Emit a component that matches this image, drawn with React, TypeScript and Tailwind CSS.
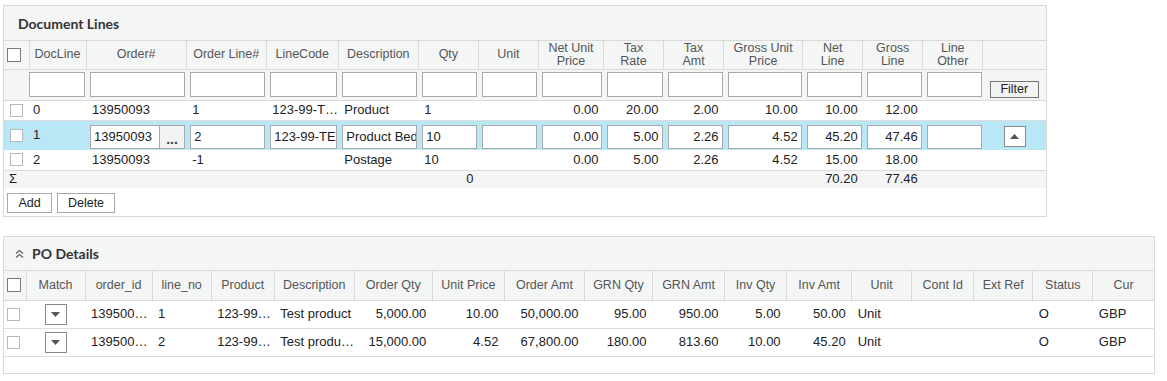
const docCols = [25, 57, 100, 80, 72, 80, 60, 60, 65, 60, 60, 79, 60, 60, 60, 63];

const docHeaders: string[][] = [
  ["DocLine"],
  ["Order#"],
  ["Order Line#"],
  ["LineCode"],
  ["Description"],
  ["Qty"],
  ["Unit"],
  ["Net Unit", "Price"],
  ["Tax", "Rate"],
  ["Tax", "Amt"],
  ["Gross Unit", "Price"],
  ["Net", "Line"],
  ["Gross", "Line"],
  ["Line", "Other"],
  [],
];

type Cell = { v: string; r?: boolean };

const docRows: Cell[][] = [
  [
    { v: "0" },
    { v: "13950093" },
    { v: "1" },
    { v: "123-99-T…" },
    { v: "Product" },
    { v: "1" },
    { v: "" },
    { v: "0.00", r: true },
    { v: "20.00", r: true },
    { v: "2.00", r: true },
    { v: "10.00", r: true },
    { v: "10.00", r: true },
    { v: "12.00", r: true },
    { v: "" },
    { v: "" },
  ],
  [
    { v: "2" },
    { v: "13950093" },
    { v: "-1" },
    { v: "" },
    { v: "Postage" },
    { v: "10" },
    { v: "" },
    { v: "0.00", r: true },
    { v: "5.00", r: true },
    { v: "2.26", r: true },
    { v: "4.52", r: true },
    { v: "15.00", r: true },
    { v: "18.00", r: true },
    { v: "" },
    { v: "" },
  ],
];

const poCols = [22, 59, 67, 59, 63, 80, 78, 72, 80, 68, 72, 62, 65, 60, 62, 59, 60, 61];

const poHeaders = [
  "Match",
  "order_id",
  "line_no",
  "Product",
  "Description",
  "Order Qty",
  "Unit Price",
  "Order Amt",
  "GRN Qty",
  "GRN Amt",
  "Inv Qty",
  "Inv Amt",
  "Unit",
  "Cont Id",
  "Ext Ref",
  "Status",
  "Cur",
];

const poRows: Cell[][] = [
  [
    { v: "139500…" },
    { v: "1" },
    { v: "123-99…" },
    { v: "Test product" },
    { v: "5,000.00", r: true },
    { v: "10.00", r: true },
    { v: "50,000.00", r: true },
    { v: "95.00", r: true },
    { v: "950.00", r: true },
    { v: "5.00", r: true },
    { v: "50.00", r: true },
    { v: "Unit" },
    { v: "" },
    { v: "" },
    { v: "O" },
    { v: "GBP" },
  ],
  [
    { v: "139500…" },
    { v: "2" },
    { v: "123-99…" },
    { v: "Test produ…" },
    { v: "15,000.00", r: true },
    { v: "4.52", r: true },
    { v: "67,800.00", r: true },
    { v: "180.00", r: true },
    { v: "813.60", r: true },
    { v: "10.00", r: true },
    { v: "45.20", r: true },
    { v: "Unit" },
    { v: "" },
    { v: "" },
    { v: "O" },
    { v: "GBP" },
  ],
];

function Box({ head }: { head?: boolean }) {
  return (
    <span
      className={
        head
          ? "block h-[14px] w-[14px] border border-[#7a7a7a] bg-white"
          : "block h-[13px] w-[13px] border border-[#b8b8b8] bg-white"
      }
    />
  );
}

function Field({ value, right, w }: { value?: string; right?: boolean; w?: string }) {
  return (
    <div
      className={`h-[24px] ${w ?? "w-full"} overflow-hidden whitespace-nowrap border border-[#a8a8a8] bg-white px-[3px] leading-[22px] ${
        right ? "text-right" : ""
      }`}
    >
      {value}
    </div>
  );
}

function Triangle({ up }: { up?: boolean }) {
  return (
    <svg width="9" height="5" viewBox="0 0 9 5">
      <path d={up ? "M0 5 L4.5 0 L9 5 Z" : "M0 0 L4.5 5 L9 0 Z"} fill="#555" />
    </svg>
  );
}

function DocumentLines() {
  const edit = [
    { v: "2" },
    { v: "123-99-TE" },
    { v: "Product Bed" },
    { v: "10" },
    { v: "" },
    { v: "0.00", r: true },
    { v: "5.00", r: true },
    { v: "2.26", r: true },
    { v: "4.52", r: true },
    { v: "45.20", r: true },
    { v: "47.46", r: true },
    { v: "" },
  ];
  return (
    <section className="w-[1044px] border border-[#d9d9d9] bg-white">
      <div className="flex h-[35px] items-center border-b border-[#d9d9d9] bg-[#f4f5f5] pl-[14px]">
        <h2 className="font-['Lato',sans-serif] text-[14px] font-bold text-[#333]">Document Lines</h2>
      </div>
      <table className="w-full table-fixed border-collapse">
        <colgroup>
          {docCols.map((w, i) => (
            <col key={i} style={{ width: w }} />
          ))}
        </colgroup>
        <thead>
          <tr className="h-[28px] border-b border-[#d9d9d9] bg-[#f4f5f5] text-[12.5px] leading-[13px] text-[#555]">
            <th className="border-r border-[#d9d9d9] pl-[3px]">
              <Box head />
            </th>
            {docHeaders.map((h, i) => (
              <th key={i} className="border-r border-[#d9d9d9] text-center font-normal last:border-r-0">
                {h.map((l) => (
                  <div key={l}>{l}</div>
                ))}
              </th>
            ))}
          </tr>
          <tr className="h-[29px] border-b border-[#d9d9d9] bg-[#f5f5f5]">
            <td />
            {docHeaders.slice(0, 14).map((_, i) => (
              <td key={i} className={i === 0 ? "pr-[1px]" : "pl-[4px] pr-[1px]"}>
                <div className="h-[25px] border border-[#a8a8a8] bg-white" />
              </td>
            ))}
            <td className="pl-[7px] pt-[6px]">
              <button className="h-[17px] w-[49px] border border-[#777] bg-[#f3f3f3] text-[12.5px] leading-[15px] text-[#222]">
                Filter
              </button>
            </td>
          </tr>
        </thead>
        <tbody className="text-[13px] leading-[16px] text-[#222]">
          {[docRows[0], "edit", docRows[1]].map((row, ri) =>
            row === "edit" ? (
              <tr key={ri} className="h-[30px] bg-[#b9e7f6]">
                <td className="pl-[6px]">
                  <Box />
                </td>
                <td className="pl-[4px]">1</td>
                <td className="pl-[4px] pr-[1px] pt-[3px]">
                  <div className="flex">
                    <Field value="13950093" w="w-[70px]" />
                    <div className="flex h-[24px] w-[25px] items-end justify-center border border-l-0 border-[#a8a8a8] bg-[#f3f3f3] pb-[4px] text-[14px] leading-[10px] font-bold text-[#444]">
                      ...
                    </div>
                  </div>
                </td>
                {edit.map((c, i) => (
                  <td key={i} className="pl-[4px] pr-[1px] pt-[3px]">
                    <Field value={c.v} right={c.r} />
                  </td>
                ))}
                <td className="pl-[21px] pt-[2px]">
                  <div className="flex h-[21px] w-[22px] items-center justify-center border border-[#888] bg-white">
                    <Triangle up />
                  </div>
                </td>
              </tr>
            ) : (
              <tr key={ri} className="h-[20px] border-b border-[#dcdcdc]">
                <td className="pl-[6px]">
                  <Box />
                </td>
                {(row as Cell[]).map((c, i) => (
                  <td
                    key={i}
                    className={`overflow-hidden whitespace-nowrap ${
                      c.r ? "pr-[5px] text-right" : i === 0 ? "pl-[4px]" : "pl-[6px]"
                    }`}
                  >
                    {c.v}
                  </td>
                ))}
              </tr>
            )
          )}
          <tr className="h-[18px] bg-[#f5f5f5]">
            <td className="pl-[5px]">Σ</td>
            <td />
            <td />
            <td />
            <td />
            <td />
            <td className="pr-[5px] text-right">0</td>
            <td />
            <td />
            <td />
            <td />
            <td />
            <td className="pr-[5px] text-right">70.20</td>
            <td className="pr-[5px] text-right">77.46</td>
            <td />
            <td />
          </tr>
        </tbody>
      </table>
      <div className="flex gap-[5px] pb-[3px] pl-[3px] pt-[5px] text-[12.5px] leading-[16px] text-[#222]">
        <button className="h-[20px] w-[45px] border border-[#a8a8a8] bg-white">Add</button>
        <button className="h-[20px] w-[58px] border border-[#a8a8a8] bg-white">Delete</button>
      </div>
    </section>
  );
}

function PoDetails() {
  return (
    <section className="mt-[19px] w-[1152px] border border-[#d9d9d9] bg-white">
      <div className="flex h-[34px] items-center gap-[7px] border-b border-[#d9d9d9] bg-[#f4f5f5] pl-[10px]">
        <svg width="11" height="10" viewBox="0 0 11 10" fill="none" stroke="#666" strokeWidth="1.3">
          <path d="M2 4.5 L5.5 1.5 L9 4.5" />
          <path d="M2 8.5 L5.5 5.5 L9 8.5" />
        </svg>
        <h2 className="font-['Lato',sans-serif] text-[14px] font-bold text-[#333]">PO Details</h2>
      </div>
      <table className="w-full table-fixed border-collapse">
        <colgroup>
          {poCols.map((w, i) => (
            <col key={i} style={{ width: w }} />
          ))}
        </colgroup>
        <thead>
          <tr className="h-[29px] border-b border-[#d9d9d9] bg-[#f4f5f5] text-[12.5px] leading-[16px] text-[#555]">
            <th className="border-r border-[#d9d9d9] pl-[3px]">
              <Box head />
            </th>
            {poHeaders.map((h) => (
              <th key={h} className="border-r border-[#d9d9d9] text-center font-normal last:border-r-0">
                {h}
              </th>
            ))}
          </tr>
        </thead>
        <tbody className="text-[13px] leading-[16px] text-[#222]">
          {poRows.map((row, ri) => (
            <tr key={ri} className="h-[28px] border-b border-[#dcdcdc]">
              <td className="pl-[3px]">
                <Box />
              </td>
              <td>
                <div className="mx-auto flex h-[21px] w-[22px] items-center justify-center border border-[#888] bg-white">
                  <Triangle />
                </div>
              </td>
              {row.map((c, i) => (
                <td
                  key={i}
                  className={`overflow-hidden whitespace-nowrap ${c.r ? "pr-[6px] text-right" : "pl-[6px]"}`}
                >
                  {c.v}
                </td>
              ))}
            </tr>
          ))}
          <tr className="h-[17px]">
            <td colSpan={18} />
          </tr>
        </tbody>
      </table>
    </section>
  );
}

export default function App() {
  return (
    <div className="min-h-[381px] bg-white pl-[3px] pt-[5px] font-['Liberation_Sans',Arial,sans-serif]">
      <DocumentLines />
      <PoDetails />
    </div>
  );
}
